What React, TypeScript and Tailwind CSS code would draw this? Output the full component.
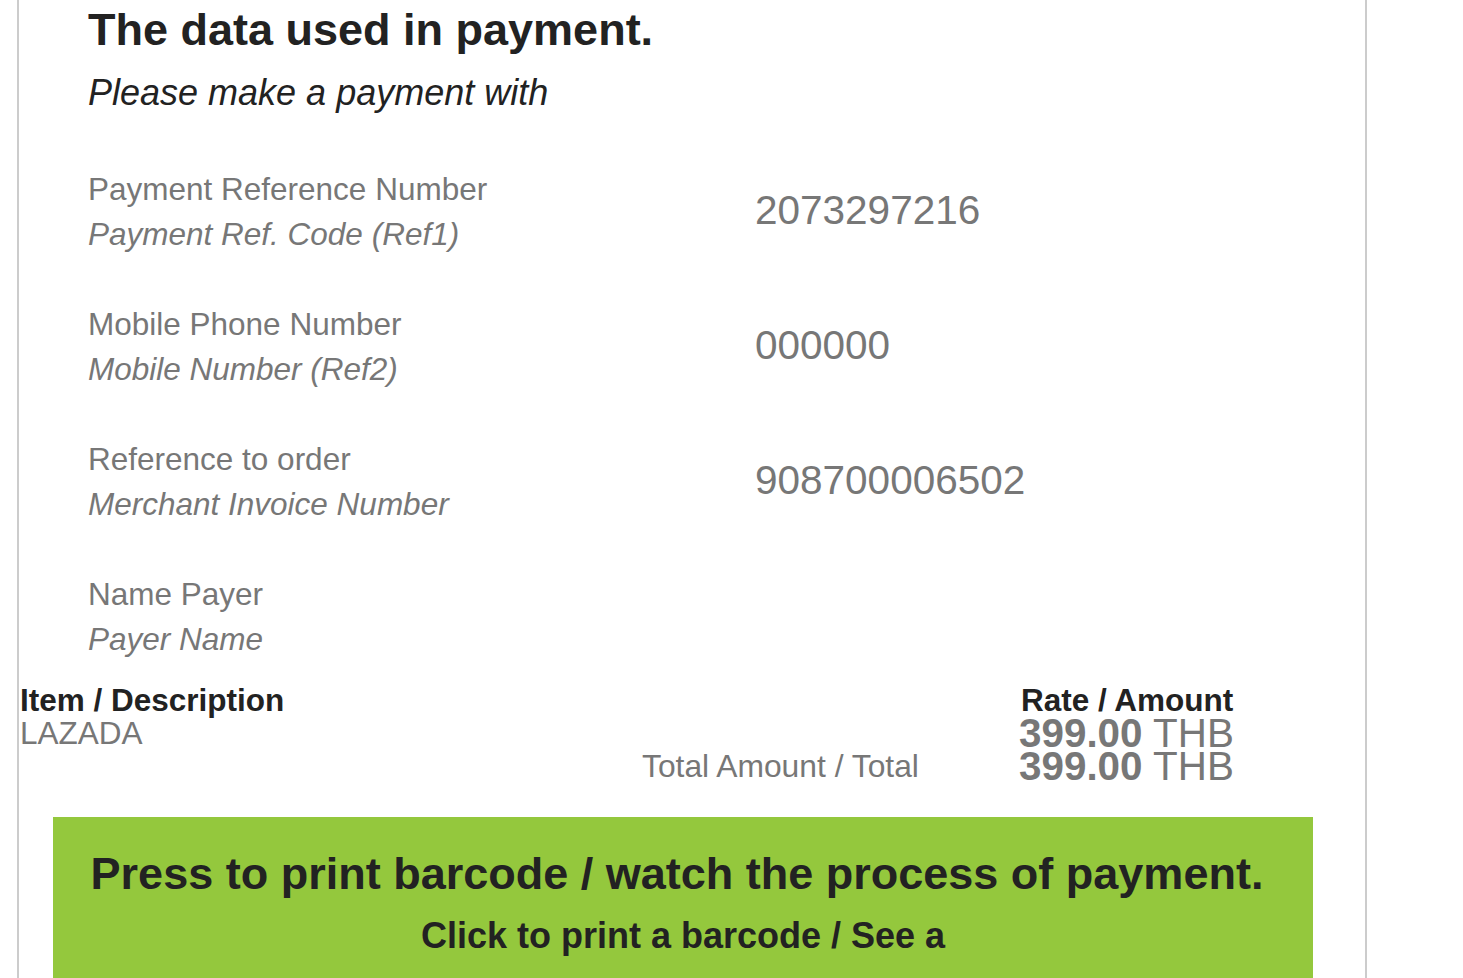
import React from "react";

const rows = [
  { label: "Payment Reference Number", sub: "Payment Ref. Code (Ref1)", value: "2073297216" },
  { label: "Mobile Phone Number", sub: "Mobile Number (Ref2)", value: "000000" },
  { label: "Reference to order", sub: "Merchant Invoice Number", value: "908700006502" },
  { label: "Name Payer", sub: "Payer Name", value: "" },
];

export default function App() {
  return (
    <div className="w-[1463px] min-h-[978px] bg-white font-['Liberation_Sans',Arial,sans-serif] overflow-hidden">
      <div className="ml-[17px] w-[1350px] min-h-[978px] border-x-2 border-[#cccccc]">
        <div className="pl-[69px] pt-[4px]">
          <h1 className="text-[45px] leading-[52px] font-bold text-[#222222]">The data used in payment.</h1>
          <p className="mt-[17px] text-[36px] leading-[40px] italic text-[#222222]">Please make a payment with</p>
        </div>

        <div className="mt-[54px] pl-[69px] flex flex-col gap-[45px]">
          {rows.map((r) => (
            <div key={r.label} className="flex items-center">
              <div className="w-[667px] text-[31.5px] leading-[45px] text-[#777777]">
                <div>{r.label}</div>
                <div className="italic">{r.sub}</div>
              </div>
              <div className="pb-[4px] text-[40.5px] leading-[45px] text-[#777777]">{r.value}</div>
            </div>
          ))}
        </div>

        <div className="mt-[22px] pl-[1px] grid grid-cols-[622px_377px_auto] leading-[33px]">
          <div className="text-[31.5px] font-bold text-[#222222]">Item / Description</div>
          <div></div>
          <div className="pl-[2px] text-[31.5px] font-bold text-[#222222]">Rate / Amount</div>

          <div className="text-[31.5px] text-[#777777]">LAZADA</div>
          <div></div>
          <div className="text-[40.4px] text-[#777777] whitespace-nowrap">
            <span className="font-bold">399.00</span> THB
          </div>

          <div></div>
          <div className="text-[31.8px] text-[#777777]">Total Amount / Total</div>
          <div className="text-[40.4px] text-[#777777] whitespace-nowrap">
            <span className="font-bold">399.00</span> THB
          </div>
        </div>

        <div className="mt-[34px] ml-[34px] w-[1260px] bg-[#94c83d] pt-[31px] pb-[40px] text-center text-[#222222] font-bold">
          <div className="text-[45px] leading-[52px] pr-[12px] whitespace-nowrap">
            Press to print barcode / watch the process of payment.
          </div>
          <div className="mt-[16px] text-[36px] leading-[40px]">Click to print a barcode / See a</div>
        </div>
      </div>
    </div>
  );
}
